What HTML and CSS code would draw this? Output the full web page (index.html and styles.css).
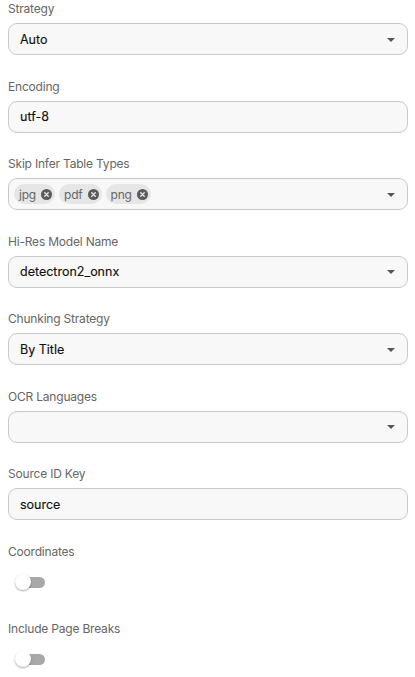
FILE: index.html
```html
<!DOCTYPE html>
<html>
<head>
<meta charset="utf-8">
<link rel="stylesheet" href="styles.css">
</head>
<body>
<div class="form">
  <div class="field">
    <div class="label">Strategy</div>
    <div class="box select"><span class="value">Auto</span><span class="arrow"></span></div>
  </div>
  <div class="field">
    <div class="label">Encoding</div>
    <div class="box"><span class="value">utf-8</span></div>
  </div>
  <div class="field">
    <div class="label">Skip Infer Table Types</div>
    <div class="box select chips-box">
      <div class="chips">
        <span class="chip">jpg<span class="chip-x"><svg viewBox="0 0 10 10" width="11" height="11"><circle cx="5" cy="5" r="5" fill="#5a5a5a"/><path d="M3.4 3.4L6.6 6.6M6.6 3.4L3.4 6.6" stroke="#e6e6e6" stroke-width="1.3" stroke-linecap="round"/></svg></span></span>
        <span class="chip">pdf<span class="chip-x"><svg viewBox="0 0 10 10" width="11" height="11"><circle cx="5" cy="5" r="5" fill="#5a5a5a"/><path d="M3.4 3.4L6.6 6.6M6.6 3.4L3.4 6.6" stroke="#e6e6e6" stroke-width="1.3" stroke-linecap="round"/></svg></span></span>
        <span class="chip">png<span class="chip-x"><svg viewBox="0 0 10 10" width="11" height="11"><circle cx="5" cy="5" r="5" fill="#5a5a5a"/><path d="M3.4 3.4L6.6 6.6M6.6 3.4L3.4 6.6" stroke="#e6e6e6" stroke-width="1.3" stroke-linecap="round"/></svg></span></span>
      </div>
      <span class="arrow"></span>
    </div>
  </div>
  <div class="field">
    <div class="label">Hi-Res Model Name</div>
    <div class="box select"><span class="value">detectron2_onnx</span><span class="arrow"></span></div>
  </div>
  <div class="field">
    <div class="label">Chunking Strategy</div>
    <div class="box select"><span class="value">By Title</span><span class="arrow"></span></div>
  </div>
  <div class="field">
    <div class="label">OCR Languages</div>
    <div class="box select"><span class="value"></span><span class="arrow"></span></div>
  </div>
  <div class="field">
    <div class="label">Source ID Key</div>
    <div class="box"><span class="value">source</span></div>
  </div>
  <div class="field">
    <div class="label">Coordinates</div>
    <div class="switch-row"><span class="switch"><span class="track"></span><span class="knob"></span></span></div>
  </div>
  <div class="field">
    <div class="label">Include Page Breaks</div>
    <div class="switch-row"><span class="switch"><span class="track"></span><span class="knob"></span></span></div>
  </div>
</div>
</body>
</html>
```
FILE: styles.css
```css
html, body {
  margin: 0;
  padding: 0;
  background: #ffffff;
}
body {
  font-family: Inter, "Noto Sans", sans-serif;
  color: #222;
}
.form {
  width: 400px;
  padding: 1px 0 0 8px;
  display: flex;
  flex-direction: column;
  gap: 23.5px;
}
.field {
  display: flex;
  flex-direction: column;
  gap: 6px;
}
.label {
  font-size: 12px;
  line-height: 16px;
  color: #666;
  letter-spacing: -0.2px;
}
.box {
  box-sizing: border-box;
  height: 32px;
  border: 1px solid #c9c9c9;
  border-radius: 9px;
  background: #f8f8f8;
  display: flex;
  align-items: center;
  padding: 0 12px 0 11px;
}
.value {
  flex: 1;
  font-size: 12.5px;
  color: #111;
  font-weight: 400;
  -webkit-text-stroke: 0.15px #111;
}
.arrow {
  width: 0;
  height: 0;
  border-left: 4px solid transparent;
  border-right: 4px solid transparent;
  border-top: 4px solid #555;
  margin-top: 1px;
}
.chips-box {
  padding-left: 5px;
}
.chips {
  flex: 1;
  display: flex;
  gap: 4px;
}
.chip {
  display: inline-flex;
  align-items: center;
  gap: 5px;
  height: 20px;
  padding: 0 3px 0 5px;
  border-radius: 10px;
  background: #e6e6e6;
  font-size: 12px;
  color: #666;
  letter-spacing: -0.2px;
}
.chip-x {
  display: inline-flex;
}
.switch-row {
  height: 32px;
  display: flex;
  align-items: center;
}
.switch {
  position: relative;
  width: 38px;
  height: 16px;
  margin-left: 7px;
}
.track {
  position: absolute;
  left: 2px;
  top: 3px;
  width: 28px;
  height: 11px;
  border-radius: 6px;
  background: #a8a8a8;
}
.knob {
  position: absolute;
  left: 0;
  top: 0;
  width: 16px;
  height: 16px;
  border-radius: 50%;
  background: #fff;
  box-shadow: 0 1px 2px rgba(0,0,0,0.35);
}
```
